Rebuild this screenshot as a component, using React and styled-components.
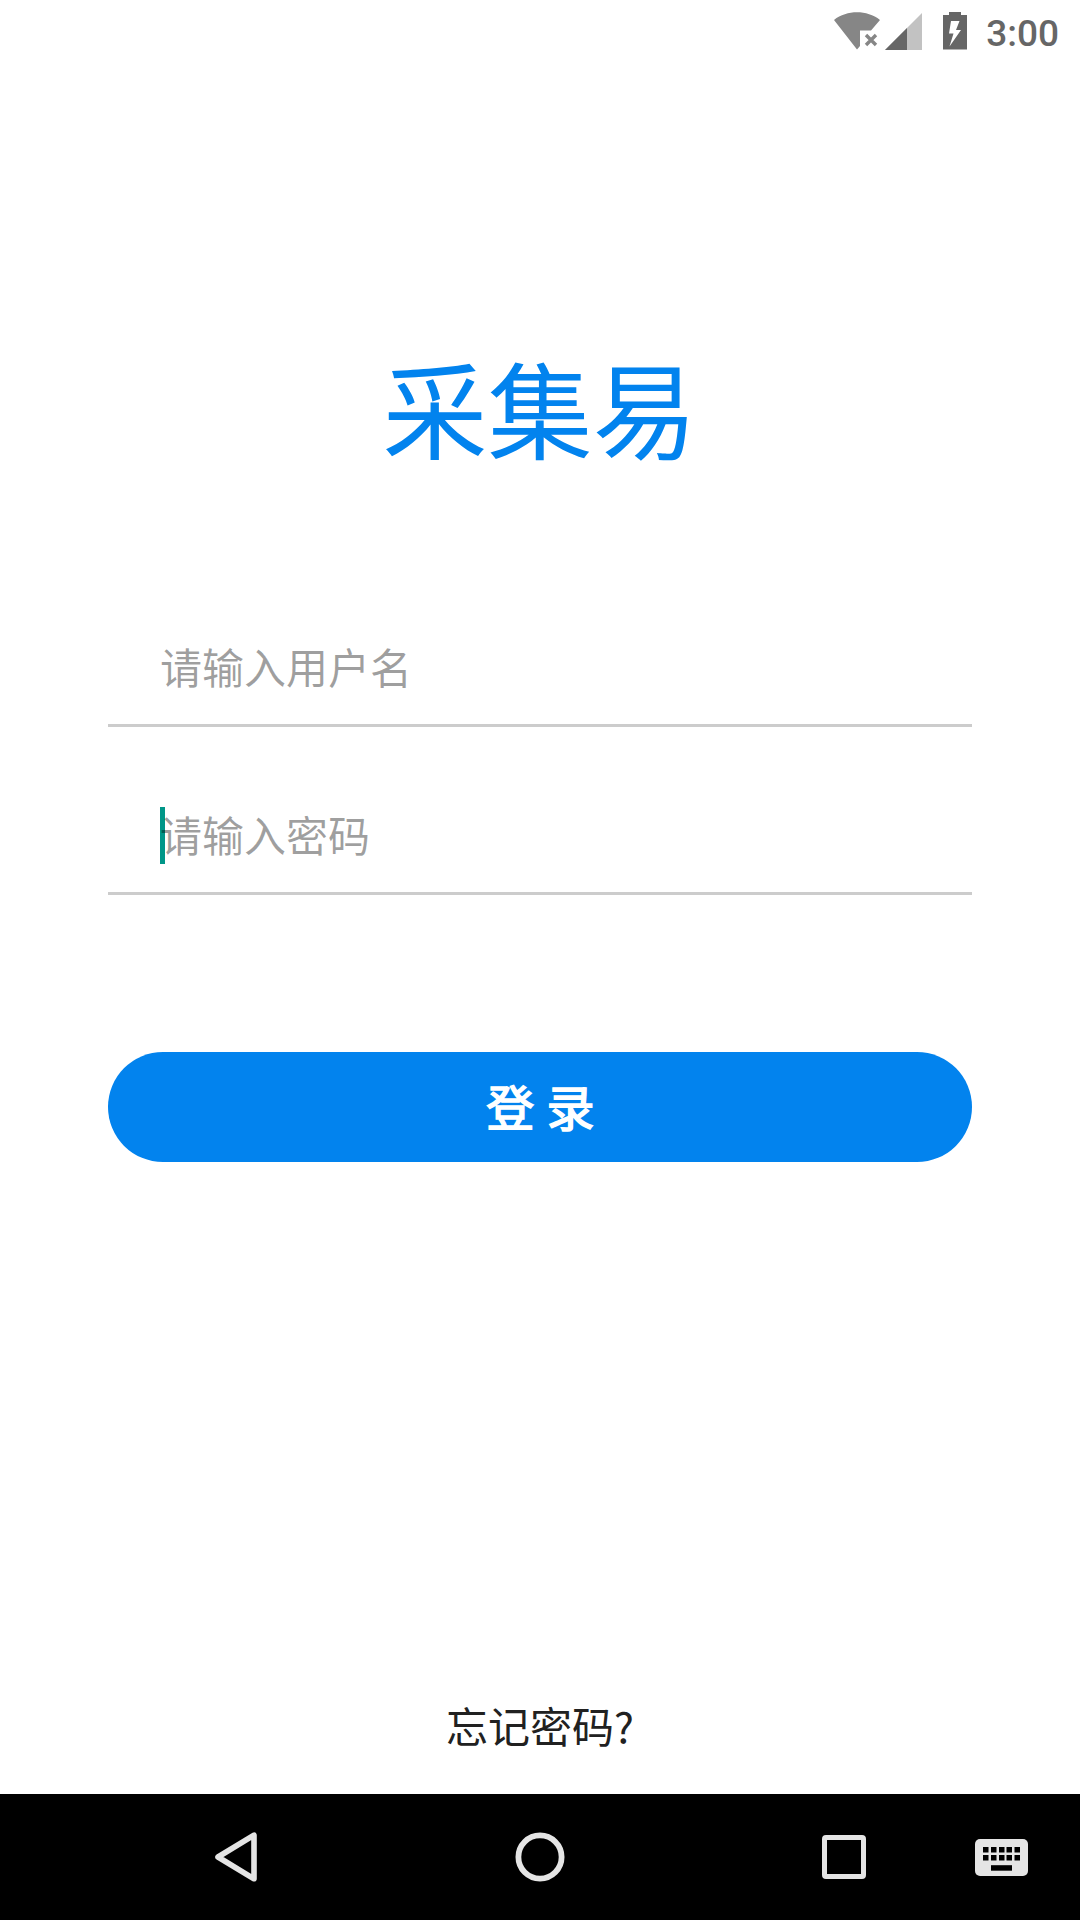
import React from "react";
import styled, { createGlobalStyle } from "styled-components";

const keyColumns = [8, 16, 24, 31.5, 39.5];

const StatusBar = () => {
  return (
    <StatusBarWrapper>
      <WifiIcon viewBox="0 0 46 38">
        <path d="M0 8 C13 -2.2 33 -2.2 46 8 L37 18.5 H26 V34 L23 37.5 Z" />
        <path className="cross" d="M32 23 L42 33 M42 23 L32 33" />
      </WifiIcon>
      <SignalIcon viewBox="0 0 37 37">
        <path className="faded" d="M37 0 V37 H0 Z" />
        <path d="M22 15 V37 H0 Z" />
      </SignalIcon>
      <BatteryIcon viewBox="0 0 24 38">
        <path
          fillRule="evenodd"
          d="M6 0 H18 V3 H24 V37.5 H0 V3 H6 Z M8 9 L6 21.5 H10.5 L6.5 34.5 L18 18 H13 L16.5 9 Z"
        />
      </BatteryIcon>
      <Clock>3:00</Clock>
    </StatusBarWrapper>
  );
};

const NavigationBar = () => {
  return (
    <NavBarWrapper>
      <NavButton type="button" aria-label="back" $width={42} $height={50}>
        <svg viewBox="0 0 42 50">
          <path d="M3 25 L39 3.2 V46.8 Z" strokeWidth="5.6" />
        </svg>
      </NavButton>
      <NavButton type="button" aria-label="home" $width={50} $height={50}>
        <svg viewBox="0 0 50 50">
          <circle cx="25" cy="25" r="21.6" strokeWidth="5.8" />
        </svg>
      </NavButton>
      <NavButton type="button" aria-label="recent" $width={44} $height={44}>
        <svg viewBox="0 0 44 44">
          <rect x="2.5" y="2.5" width="39" height="39" rx="1.5" strokeWidth="5" />
        </svg>
      </NavButton>
      <NavButton type="button" aria-label="keyboard" $width={53} $height={37}>
        <svg viewBox="0 0 53 37">
          <rect className="board" width="53" height="37" rx="5" />
          {keyColumns.map((x) => (
            <React.Fragment key={x}>
              <rect className="key" x={x} y="8" width="5.5" height="5.5" />
              <rect className="key" x={x} y="16" width="5.5" height="5.5" />
            </React.Fragment>
          ))}
          <rect className="key" x="16" y="26.2" width="21" height="5.5" />
        </svg>
      </NavButton>
    </NavBarWrapper>
  );
};

const App = () => {
  return (
    <>
      <GlobalStyle />
      <Screen>
        <StatusBar />
        <LoginContent>
          <Title>采集易</Title>
          <Field>
            <Hint>请输入用户名</Hint>
          </Field>
          <Field>
            <Caret />
            <Hint>请输入密码</Hint>
          </Field>
          <LoginButton type="button">登 录</LoginButton>
          <ForgotLink>忘记密码?</ForgotLink>
        </LoginContent>
        <NavigationBar />
      </Screen>
    </>
  );
};

const GlobalStyle = createGlobalStyle`
  * {
    box-sizing: border-box;
  }

  body {
    margin: 0;
    background: #fff;
    font-family: "Noto Sans CJK SC", "Noto Sans", sans-serif;
  }

  svg {
    display: block;
  }
`;

const Screen = styled.div`
  display: flex;
  flex-direction: column;
  width: 1080px;
  height: 1920px;
  overflow: hidden;
  background: #fff;
`;

const StatusBarWrapper = styled.header`
  display: flex;
  justify-content: flex-end;
  align-items: flex-start;
  height: 72px;
  padding: 12px 21px 0 0;
  fill: #666;
`;

const WifiIcon = styled.svg`
  width: 46px;
  height: 38px;
  margin-right: 5px;
  fill: #868686;

  .cross {
    fill: none;
    stroke: #868686;
    stroke-width: 3.4;
  }
`;

const SignalIcon = styled.svg`
  width: 37px;
  height: 37px;
  margin: 1px 21px 0 0;

  .faded {
    fill: #c2c2c2;
  }
`;

const BatteryIcon = styled.svg`
  width: 24px;
  height: 38px;
  margin-right: 19px;
`;

const Clock = styled.span`
  font-family: Roboto, sans-serif;
  font-size: 37px;
  font-weight: 500;
  line-height: 43px;
  color: #666;
`;

const LoginContent = styled.main`
  flex: 1;
  display: flex;
  flex-direction: column;
  padding: 257px 108px 0;
`;

const Title = styled.h1`
  margin: 0 0 78px;
  font-size: 105px;
  font-weight: 400;
  line-height: 152px;
  text-align: center;
  color: #0283ee;
`;

const Field = styled.div`
  position: relative;
  height: 168px;
  padding: 77px 0 0 52px;
  border-bottom: 3px solid #ccc;
`;

const Hint = styled.span`
  position: relative;
  display: block;
  font-size: 42px;
  line-height: 60px;
  color: rgba(0, 0, 0, 0.38);
`;

const Caret = styled.span`
  position: absolute;
  top: 80px;
  left: 52px;
  width: 5px;
  height: 57px;
  background: #009688;
`;

const LoginButton = styled.button`
  height: 110px;
  margin-top: 157px;
  padding: 0 0 5px 1px;
  border: none;
  border-radius: 55px;
  background: #0283ee;
  font-family: inherit;
  font-size: 48px;
  font-weight: 400;
  line-height: 72px;
  word-spacing: 1.5px;
  color: #fff;
  -webkit-text-stroke: 1.5px #fff;
`;

const ForgotLink = styled.a`
  margin-top: 533px;
  font-size: 42px;
  line-height: 60px;
  text-align: center;
  color: #212121;
`;

const NavBarWrapper = styled.nav`
  display: flex;
  align-items: center;
  height: 126px;
  padding-left: 215px;
  background: #000;
`;

const NavButton = styled.button`
  width: ${(props) => props.$width}px;
  height: ${(props) => props.$height}px;
  padding: 0;
  border: none;
  background: none;

  &:nth-child(2) {
    margin-left: 258px;
  }
  &:nth-child(3) {
    margin-left: 257px;
  }
  &:nth-child(4) {
    margin-left: 109px;
  }

  svg {
    width: 100%;
    height: 100%;
    fill: none;
    stroke: #e5e5e5;
    stroke-linejoin: round;
  }
  .board {
    fill: #e5e5e5;
    stroke: none;
  }
  .key {
    fill: #000;
    stroke: none;
  }
`;

export default App;
